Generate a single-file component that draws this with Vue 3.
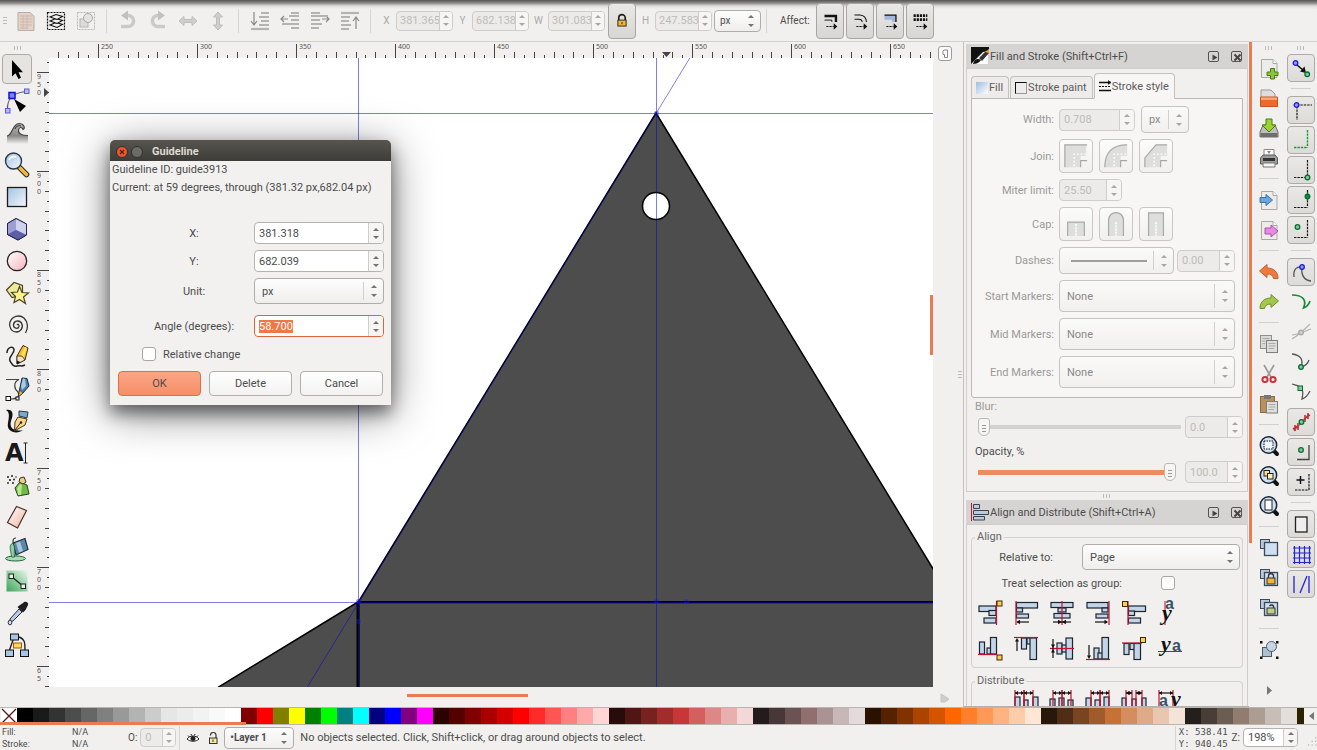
<script setup>
import { onMounted, ref } from 'vue'

const angle = ref(null)
onMounted(() => {
  angle.value.focus()
  angle.value.select()
})

/* ---------- icon drawing helpers, all on a 24 x 24 grid ---------- */
const bar = (x, y, w, h) => `<rect x="${x}" y="${y}" width="${w}" height="${h}" fill="#c3d5e8" stroke="#1c2430" stroke-width="1.2"/>`
const gold = (x, y) => `<rect x="${x}" y="${y}" width="5" height="5" fill="#fc5" stroke="#3a2a00"/>`
const red = d => `<path d="${d}" stroke="#c8102e" stroke-width="1.2" fill="none"/>`
const ink = (d, w = 1.3, c = '#111') => `<path d="${d}" stroke="${c}" stroke-width="${w}" fill="none"/>`
const solid = (d, c = '#111') => `<path d="${d}" fill="${c}"/>`
const dash = (d, c = '#111', w = 1.2) => `<path d="${d}" stroke="${c}" stroke-width="${w}" stroke-dasharray="2.4 1" fill="none"/>`
const dot = (x, y, f = '#7fc99a', s = '#0a6b30') => `<circle cx="${x}" cy="${y}" r="2.3" fill="${f}" stroke="${s}" stroke-width="1.3"/>`
const blueDot = (x, y) => dot(x, y, '#8f95f5', '#1a1ad8')
const sheet = `<path d="M4.500 3.500H16L20 7.500V21.500H4.500Z" fill="#ececea" stroke="#a9a9a6"/><path d="M16 3.500V7.500H20" fill="#fff" stroke="#a9a9a6"/>`
const lens = inner => `<path d="M17 17L20 20" stroke="#111" stroke-width="4" stroke-linecap="round"/><circle cx="11.500" cy="11" r="8.200" fill="#cfe0f3" stroke="#1d2734" stroke-width="1.500"/>${inner}`
const stack = inner => `<rect x="3.500" y="3.500" width="9" height="9" fill="#b7c9da" stroke="#3c4a58"/><rect x="7.500" y="6.500" width="13" height="13" fill="#cddff0" stroke="#3c4a58" stroke-width="1.300"/>${inner}`

const tools = [
  { name: 'Select', art: '<path d="M7 3V19.500L10.500 16.300L13.500 22L16 20.700L13.500 15.200H18Z" fill="#000"/>' },
  { name: 'Edit nodes', art: ink('M2.500 21C2 12 5 4 21 2.500', 1.2, '#555') + '<rect x="4" y="3.500" width="6" height="6" fill="#7d86f0" stroke="#1010c8" stroke-width="1.500"/><rect x="19.500" y="0" width="4.500" height="4.500" fill="#b3b8f7" stroke="#5a5ae0"/><rect x="0.500" y="19.500" width="4.500" height="4.500" fill="#b3b8f7" stroke="#5a5ae0"/><path d="M9 10L21 17L15 23Z" fill="#000"/>' },
  { name: 'Tweak', art: '<path d="M2 15C7 14 7 3 14 2.500C19 2.500 20 7 18 8.500C17 6 14 6 13.500 9C13 13 17 14.500 23 14.500V23H2Z" fill="url(#gray)"/>' + ink('M2 15C8 14 7 3 14 2.500C19 2.500 20.500 7 18 8.500C17 5.500 14 6 13.500 9C13 13 17 14.500 23 14.500M10 8C11 5 14 4 16 5', 1.2, '#444') },
  { name: 'Zoom', art: '<path d="M14 14L21.500 21.500" stroke="#222" stroke-width="5.500" stroke-linecap="round"/><path d="M15 15L21.500 21.500" stroke="#f5b93a" stroke-width="3.600" stroke-linecap="round"/><circle cx="8.500" cy="8" r="8" fill="url(#sky)" stroke="#26384a" stroke-width="1.400"/><path d="M4 7C5 4 8 3 11 4" stroke="#fff" stroke-width="1.500" fill="none"/>' },
  { name: 'Rectangle', art: '<rect x="2.500" y="2.500" width="19" height="19" fill="url(#sky)" stroke="#1b1b1b" stroke-width="1.300"/>' },
  { name: '3D box', art: '<path d="M11 1.500L21.500 7V18L13 23L2.500 17.500V6.500Z" fill="#8c8ec8" stroke="#23234a"/><path d="M11 1.500L21.500 7V18L11 13Z" fill="#cfd1ee"/><path d="M2.500 6.500L11 1.500V13L2.500 17.500Z" fill="#9c9ed4"/><path d="M2.500 17.500L11 13L21.500 18L13 23Z" fill="#5d5fa6"/><path d="M11 1.500L21.500 7V18L13 23L2.500 17.500V6.500Z" fill="none" stroke="#23234a"/>' },
  { name: 'Ellipse', art: '<circle cx="12" cy="12" r="9.700" fill="url(#rose)" stroke="#222" stroke-width="1.300"/>' },
  { name: 'Star', art: '<path d="M1.500 9L9 1.500L17.500 4.500V14L7 16.500Z" fill="#efe9a0" stroke="#4a4620" stroke-width="1.200"/><path d="M14.500 5.500L17 11.500L23.500 12L18.500 16L20.500 22.500L14.500 18.500L9 21.500L10.500 15.500L6.500 11.500L12.500 11Z" fill="#fbf38e" stroke="#4a4620" stroke-width="1.200"/>' },
  { name: 'Spiral', art: ink('M12 12C12.500 10.500 14.500 11.500 14 13.500C13 16.500 8.500 15.500 8.500 12C8.500 8 14 6.500 16.500 10C19 14.500 15.500 19 11.500 19C6 19 3.500 13 5 9C7 3.500 14 1 19 5C23 9 23.500 15 20.500 20', 1.3, '#333') },
  { name: 'Pencil', art: '<path d="M2 8C2 2 9 0 9 5C9 9 3 12 5 16C7 19 8 22 12 21C16 20 16 22 20 20" stroke="#222" stroke-width="1.500" fill="none"/><path d="M12 11L18 0.500L23 3L20 15L12 19Z" fill="#ffb92c" stroke="#3a2a10"/><path d="M15 12L20 2L22 3L18 14Z" fill="#ffe45c"/><path d="M12 11L12 19L20 15L17 11Z" fill="#f7e2c0" stroke="#3a2a10" stroke-width=".8"/><path d="M12 15.500V19L15.500 17.200Z" fill="#111"/>' },
  { name: 'Bezier', art: ink('M1 2.500H14C8 5 9 12 13 15C15 19 13 22 5 22', 1.2, '#444') + '<rect x="1" y="19.500" width="4.500" height="4" fill="#fff" stroke="#111"/><path d="M17 1L22 1.500L24 9L18 16L13.500 19.500L14.500 13Z" fill="#4e7da8" stroke="#1c2c3c"/><path d="M18 1.500L20 2L21 9L17 13L16 9Z" fill="#a8cbe8"/><path d="M14.500 13L18 16L13.500 19.500Z" fill="#f3bf3a" stroke="#333" stroke-width=".7"/><rect x="11" y="20" width="3" height="3" fill="#fff" stroke="#111"/>' },
  { name: 'Calligraphy', art: '<path d="M1 1C8 0 9 5 6 12C4 19 9 23 18 21C12 26 1 23 3 14C4 8 5 3 1 1Z" fill="#111"/><path d="M14 2L23 3L22 9L14 7Z" fill="#7fa9cc" stroke="#263849"/><path d="M13 8L22 10L20 16L9.500 22L10 13Z" fill="#f8d888" stroke="#4b3514"/><path d="M10 21L15.500 14" stroke="#222"/><circle cx="16" cy="13.500" r="1.200" fill="#222"/>' },
  { name: 'Text', text: true },
  { name: 'Spray', art: '<path d="M10 15L15 9L22 12L24 21L13 23Z" fill="#74b849" stroke="#23451a"/><path d="M12 15L15 11L17 12L16 22L13 22Z" fill="#b9e78d"/><path d="M14 9L15 5L19 4L21 9L18 11Z" fill="#e8cf8a" stroke="#3d3520"/><g fill="#222"><circle cx="3" cy="4" r="1"/><circle cx="7" cy="3" r="1"/><circle cx="5" cy="7" r="1.100"/><circle cx="9" cy="6.500" r="1"/><circle cx="3" cy="10" r=".9"/><circle cx="8" cy="10" r="1"/><circle cx="11" cy="4" r=".8"/></g>' },
  { name: 'Eraser', art: '<path d="M11.500 1.500L21.500 5.500L12.500 23L2.500 17.500Z" fill="url(#peach)" stroke="#4a3028" stroke-width="1.200"/>' },
  { name: 'Paint bucket', art: '<ellipse cx="10.500" cy="21.500" rx="10" ry="2.500" fill="#a8dcb4" stroke="#23603a"/><path d="M8 6L20 1.500L23 12.500L11 18Z" fill="#5d87a8" stroke="#1e3040" stroke-width="1.200"/><path d="M11 6L15 4.500L18 14L14 15.500Z" fill="#a6c8e0"/><path d="M8 6C3 8 6 13 6.500 20H9.500C9 15 10 11 9 9Z" fill="#8fcfa0" stroke="#23603a" stroke-width=".8"/>' + ink('M9 7C7 4 8 1 11 1', 1.2, '#333') },
  { name: 'Gradient', art: '<rect x="1.500" y="1.500" width="21" height="21" fill="url(#leaf)"/>' + ink('M7 8L18 17', 1.3, '#222') + '<rect x="4" y="5" width="4.500" height="4.500" fill="#dff3e3" stroke="#222"/><rect x="16" y="15" width="4.500" height="4.500" fill="#dff3e3" stroke="#222"/>' },
  { name: 'Dropper', art: '<path d="M5 18L14 8L17 11L8 20L5 21Z" fill="#b9cbe0" stroke="#27303c"/><path d="M12.500 6L18 11.500L20.500 9L23 4C24 1 20 -0.500 18 2L15 4Z" fill="#1d1d22"/><ellipse cx="5" cy="21.500" rx="1.800" ry="2.400" fill="#cfe0f3" stroke="#27303c"/>' },
  { name: 'Connector', art: ink('M8 7L4.500 17M14 4C20 6 20 10 20 17', 1.4, '#222') + '<rect x="5.500" y="1" width="8" height="6" fill="#a9c6e6" stroke="#111"/><rect x="8.500" y="10" width="8" height="5" fill="#ffd65c" stroke="#a05a00"/><rect x="0.500" y="17" width="8" height="6.500" fill="#a9c6e6" stroke="#111"/><rect x="15.500" y="17" width="8" height="6.500" fill="#a9c6e6" stroke="#111"/>' }
]

const g = '#b4b3b1'
const editButtons = [
  [
    { name: 'Select all', art: '<path d="M4 3.500H16L20 7V21.500H4Z" fill="#e4d2c6" stroke="#b5b0ab"/><path d="M6 7H18M6 10H18M6 13H18M6 16H18M6 19H14M9 6V20M13 6V20" stroke="#cbb8ac" fill="none"/>' },
    { name: 'Select all in all layers', art: '<rect x="3.500" y="3.500" width="17" height="17" fill="none" stroke="#111" stroke-width="1.200" stroke-dasharray="2 1"/><path d="M6 16L12 13.500L18.500 15.500L13 18.500Z" fill="#f2f2f2" stroke="#111" stroke-width="1.100"/><path d="M6 12L12 9.500L18.500 11.500L13 14.500Z" fill="#f2f2f2" stroke="#111" stroke-width="1.100"/><path d="M6 8L12 5.500L18.500 7.500L13 10.500Z" fill="#f2f2f2" stroke="#111" stroke-width="1.100"/>' },
    { name: 'Deselect', art: '<rect x="3.500" y="3.500" width="17" height="17" fill="none" stroke="#b8b7b5" stroke-dasharray="2 1"/><rect x="6" y="10" width="8" height="8" fill="#dcdbd9" stroke="#b5b5b5"/><circle cx="14" cy="9" r="4.500" fill="#e4e3e1" stroke="#aaa"/>' }
  ],
  [
    { name: 'Rotate left', art: '<path d="M10 6.500H12A5.300 5.300 0 0 1 12 17.500H5" fill="none" stroke="#cbcac8" stroke-width="3.600"/><path d="M12 1.500V11.500L5 6.500Z" fill="#c2c1bf"/>' },
    { name: 'Rotate right', art: '<path d="M14 6.500H12A5.300 5.300 0 0 0 12 17.500H19" fill="none" stroke="#cbcac8" stroke-width="3.600"/><path d="M12 1.500V11.500L19 6.500Z" fill="#c2c1bf"/>' },
    { name: 'Flip horizontal', art: '<path d="M3 12L8 7.500V10.500H16V7.500L21 12L16 16.500V13.500H8V16.500Z" fill="#cfcecc" stroke="#bdbcba"/>' },
    { name: 'Flip vertical', art: '<path d="M12 3L7.500 8H10.500V16H7.500L12 21L16.500 16H13.500V8H16.500Z" fill="#cfcecc" stroke="#bdbcba"/>' }
  ],
  [
    { name: 'Lower to bottom', art: ink('M3 20H21', 2.2, g) + ink('M6 3V15M3 12L6 16L9 12', 1.2, '#8b8a88') + ink('M13 4H21M11 8H21M13 12H21M11 16H21', 1.8, g) },
    { name: 'Lower', art: ink('M3 10H10M6 7L3 10L6 13', 1.2, '#8b8a88') + ink('M13 4H21M11 7H21M13 11H21M4 15H21M13 19H21', 1.8, g) },
    { name: 'Raise', art: ink('M14 10H21M18 7L21 10L18 13', 1.2, '#8b8a88') + ink('M3 4H12M3 7H20M3 11H12M3 15H14M3 19H11', 1.8, g) },
    { name: 'Raise to top', art: ink('M3 4H21', 2.2, g) + ink('M18 20V8M15 12L18 8L21 12', 1.2, '#8b8a88') + ink('M3 8H12M3 12H11M3 16H13M3 20H11', 1.8, g) }
  ]
]

const arrow = dash('M8 18H16', '#111', 1.3) + solid('M16 14.500L20 18L16 21.500Z')
const affects = [
  { name: 'Scale stroke width', art: ink('M6 6.500H18.500V13', 2.6) + ink('M6 11H14V13', 1) + arrow },
  { name: 'Scale rounded corners', art: ink('M6 5.500H12Q18.500 6 19 13M6 10H11Q14 10 14.500 13', 1.1) + arrow },
  { name: 'Move gradients', art: '<path d="M6 5.500H18.500V13H14V10.500H6Z" fill="#a3b6de"/>' + ink('M6 5.500H18.500V13', 1.4) + arrow },
  { name: 'Move patterns', art: dash('M5 6H20', '#111', 3) + dash('M5 10.500H20', '#111', 3) + arrow }
]

const transforms = [
  { label: 'X', value: '381.365' },
  { label: 'Y', value: '682.138' },
  { label: 'W', value: '301.083' }
]

const commands = [
  { name: 'New', art: sheet + '<path d="M13.500 12.500H17.500V16H21V19.500H17.500V23H13.500V19.500H10V16H13.500Z" fill="#8cc63f" stroke="#4c7a12"/>' },
  { name: 'Open', art: '<path d="M4 4H14L18 8V18H4Z" fill="#ddd" stroke="#999"/><path d="M3.500 11H20.500V20.500H3.500Z" fill="#ee6a2c" stroke="#c4551f"/><path d="M4 11.500H20V14H4Z" fill="#ffa673"/>' },
  { name: 'Save', art: '<path d="M6 9H18L21 16V21H3V16Z" fill="#bdbdbb" stroke="#6d6d6b"/><path d="M3.500 17H20.500V21H3.500Z" fill="#6e6e6c"/><path d="M9 3H15V9H19L12 16L5 9H9Z" fill="#9bd332" stroke="#4c7a12"/>' },
  { name: 'Print', art: '<path d="M7 3.500H17V11H7Z" fill="#fff" stroke="#888"/><path d="M10 5L12 8L14 5" fill="#888"/><path d="M3.500 12L6 9H18L20.500 12V18H3.500Z" fill="#9d9d9b" stroke="#5a5a58"/><path d="M6 12H18V15H6Z" fill="#333"/><path d="M6 17H18V21H6Z" fill="#f5f5f3" stroke="#777"/>' },
  null,
  { name: 'Import', art: sheet + '<path d="M3 9.500H9V6.500L15.500 12L9 17.500V14.500H3Z" fill="#6aa5dd" stroke="#3d73a6"/>' },
  { name: 'Export', art: sheet + '<path d="M8 10H14V7L21 13L14 19V16H8Z" fill="#e78be0" stroke="#b050aa"/>' },
  null,
  { name: 'Undo', art: '<path d="M2.500 11L10 4.500V8C17 8 21 12 21 18.500H16.500C16 15.500 14 14 10 14V17.500Z" fill="#ef7a3e" stroke="#c4602c"/>' },
  { name: 'Redo', art: '<path d="M21.500 11L14 4.500V8C7 8 3 12 3 18.500H7.500C8 15.500 10 14 14 14V17.500Z" fill="#a2c74b" stroke="#6f9228"/>' },
  null,
  { name: 'Copy', art: '<rect x="3.500" y="3.500" width="11" height="13" fill="#d9d9d6" stroke="#8e8e8b"/><rect x="9.500" y="8.500" width="11" height="12" fill="#dededb" stroke="#7e7e7b"/>' + ink('M11.500 11.500H18.500M11.500 14H18.500M11.500 16.500H17M5.500 6.500H12.500M5.500 9H8M5.500 11.500H8', 1, '#aaa') },
  { name: 'Cut', art: '<path d="M7 3L14 15M17 3L10 15" stroke="#9b9b99" stroke-width="1.700"/><circle cx="8" cy="17.500" r="2.600" fill="none" stroke="#c8343c" stroke-width="2"/><circle cx="16" cy="17.500" r="2.600" fill="none" stroke="#c8343c" stroke-width="2"/>' },
  { name: 'Paste', art: '<rect x="3.500" y="4.500" width="14" height="16" fill="#b9915f" stroke="#8d6b40"/><path d="M7 3H14V7H7Z" fill="#777"/><rect x="9.500" y="9.500" width="11" height="11.500" fill="#dededb" stroke="#7e7e7b"/>' + ink('M11.500 12.500H18.500M11.500 15H18.500M11.500 17.500H17', 1, '#aaa') },
  null,
  { name: 'Zoom selection', art: lens('<rect x="7" y="7" width="9" height="8" fill="#eef5fc" stroke="#111" stroke-dasharray="1.500 1"/>') },
  { name: 'Zoom drawing', art: lens('<rect x="7" y="6.500" width="5.500" height="5.500" fill="#ffe08a" stroke="#222"/><rect x="10.500" y="9.500" width="5.500" height="5.500" fill="#fff0b0" stroke="#222"/>') },
  { name: 'Zoom page', art: lens('<rect x="8" y="6" width="7" height="10" fill="#fff" stroke="#222"/>') },
  null,
  { name: 'Duplicate', art: stack('') },
  { name: 'Clone', art: stack('<rect x="10" y="12" width="8" height="6" fill="#f2b632" stroke="#333"/><path d="M11.500 12V10A2.500 2.500 0 0 1 16.500 10V12" fill="none" stroke="#333" stroke-width="1.300"/>') },
  { name: 'Unlink clone', art: stack('<rect x="10" y="12" width="8" height="6" fill="#bcd08a" stroke="#333"/><path d="M12.500 10A2.500 2.500 0 0 1 16.500 10V12" fill="none" stroke="#333" stroke-width="1.300"/>') },
  null,
  { name: 'Group', art: '<rect x="5.500" y="9.500" width="9" height="9" fill="#aebfcf" stroke="#4d5b68"/><circle cx="14.500" cy="8.500" r="5" fill="#c5d6e6" stroke="#4d5b68"/>' + solid('M3 3H5.500V5.500H3ZM19 3H21.500V5.500H19ZM3 18.500H5.500V21H3ZM19 18.500H21.500V21H19Z') }
]

const corner = 'M18.500 2V19.500M5 19.500H18.500'
const snaps = [
  { name: 'Enable snapping', on: true, art: ink('M8 9L14 14', 1.6) + solid('M17 17L15.500 10.500L11 15.500Z') + blueDot(6.5, 7) + dot(18.2, 18.3) },
  null,
  { name: 'Snap bounding boxes', on: true, art: dash('M8 8V22M8 7H23') + blueDot(7.5, 7) },
  { name: 'Snap to edges', on: true, art: dash(corner, '#12a02c', 1.4) },
  { name: 'Snap to corners', on: true, art: dash(corner) + dot(18.5, 19.5) },
  { name: 'Snap edge midpoints', on: true, art: dash(corner) + ink('M18.500 4V13', 1.2, '#0a6b30') + dot(18.5, 8.5, '#0f8a3f') },
  { name: 'Snap box centers', on: true, art: dash(corner) + dot(8.5, 9) },
  null,
  { name: 'Snap nodes', on: true, art: ink('M5 17C4 9 8 6 13 7C12 15 15 20 22 21', 1.3, '#555') + blueDot(13, 7) },
  { name: 'Snap to paths', art: ink('M3 5C14 5 18 10 14.500 18C18 17 20 14 21 11', 1.7, '#178a36') },
  { name: 'Snap intersections', art: ink('M3 19C10 15 16 9 21 4M3 15C10 14 16 11 22 9', 1.2, '#b5b4b2') + dot(12, 12.5, '#ccc', '#aaa') },
  { name: 'Snap cusp nodes', art: ink('M3 4C11 5 15 9 12 17C17 16 19 13 20 10', 1.3, '#555') + dot(12, 17) },
  { name: 'Snap smooth nodes', art: ink('M3 4C10 6 16 6 13 19C17 18 19 15 21 11', 1.3, '#555') + '<rect x="9" y="6" width="4.500" height="4.500" fill="#7fc99a" stroke="#0a6b30"/>' },
  { name: 'Snap line midpoints', on: true, art: ink('M5 21L20 4', 1.2, '#888') + ink('M6 15V21M9 13V20M16 5V12M19 3V9M4 19L9 16M15 9L21 5', 1.5, '#c8242c') + dot(12.5, 12) },
  { name: 'Snap object centers', on: true, art: ink('M20 5V19.500H8', 1.3, '#444') + dot(12, 10) },
  { name: 'Snap rotation centers', on: true, art: dash('M20 4V20M6 20H20') + ink('M11.500 6V14M7.500 10H15.500', 1.5) },
  null,
  { name: 'Snap page border', on: true, art: '<rect x="6.500" y="5" width="11.500" height="15" fill="#eee" stroke="#222" stroke-width="1.300"/>' },
  { name: 'Snap grids', on: true, art: ink('M5.500 4V22M10.500 4V22M15.500 4V22M20.500 4V22M4 6H22M4 11H22M4 16H22M4 20.500H22', 1.2, '#2323d8') },
  { name: 'Snap guides', on: true, art: ink('M5 4V21M11 21L18 4M20 4V21', 1.3, '#2323d8') }
]

const aligns = [
  { name: 'Align right edges to left of anchor', art: bar(1, 5, 17, 5.5) + bar(11, 9.500, 7, 5) + bar(6, 17, 12, 5) + red('M18.500 0V24') + gold(19, 0) },
  { name: 'Align left edges', art: bar(2.5, 1.5, 21, 5.500) + bar(2.5, 7, 6, 4) + bar(2.5, 13, 12, 4) + red('M2 0V24') + ink('M3 21H15', 1.2) + solid('M2.500 21L6 18.800V23.200Z') },
  { name: 'Center on vertical axis', art: bar(1, 1.5, 22, 5) + bar(8, 7, 8, 4) + bar(4, 12.500, 16, 4.500) + red('M12 0V24') + ink('M3 21H21', 1.2) + solid('M12 21L8 18.800V23.200ZM12 21L16 18.800V23.200Z') },
  { name: 'Align right edges', art: bar(1, 1.5, 21, 5.500) + bar(16, 7, 6, 4) + bar(10, 13, 12, 4) + red('M23 0V24') + ink('M9 21H21', 1.2) + solid('M22 21L18.500 18.800V23.200Z') },
  { name: 'Align left edges to right of anchor', art: bar(6.500, 5, 17, 5.5) + bar(6.500, 10, 6, 4.500) + bar(6.500, 17, 12, 5) + red('M6 0V24') + gold(0.5, 0.5) },
  { name: 'Align baseline anchors horizontally', glyph: 'v' },
  { name: 'Align bottom edges to top of anchor', art: bar(1.5, 5, 5, 12) + bar(9, 11, 6, 6) + bar(12.500, 0.500, 6, 16.500) + red('M0 17.500H19') + gold(19, 18) },
  { name: 'Align top edges', art: bar(7.500, 1, 5, 11) + bar(13, 1, 4, 6) + bar(16, 1, 6.500, 21.500) + red('M0 0.500H24') + ink('M3 3V14', 1.2) + solid('M3 1L5 4.500H1Z') },
  { name: 'Center on horizontal axis', art: bar(7, 6, 5, 11) + bar(12, 8, 5, 7) + bar(16, 1, 6.500, 21) + red('M0 11.500H24') + ink('M3 2V21', 1.2) + solid('M3 11L1 7.500H5ZM3 12L1 15.500H5Z') },
  { name: 'Align bottom edges', art: bar(8, 11, 5, 11) + bar(12, 16, 5, 6) + bar(16, 0.5, 6.500, 21.500) + red('M0 22.500H24') + ink('M3 8V19', 1.2) + solid('M3 22L1 18.500H5Z') },
  { name: 'Align top edges to bottom of anchor', art: bar(2, 6.500, 5, 11) + bar(8, 6.500, 5, 6) + bar(12, 6.500, 6.500, 16) + red('M0 6H20') + gold(18.5, 0.5) },
  { name: 'Align baseline anchors vertically', glyph: 'h' }
]

const arrowsAt = (a, c) => red(`M${a} 0V24M${c} 0V24`) + ink(`M${a} 3H${c}`, 1.2) + solid(`M${a} 3L${a + 3} 1V5ZM${c} 3L${c - 3} 1V5Z`)
const distributes = [
  { name: 'Distribute left edges', art: bar(1, 7, 5, 14) + bar(10, 10, 4, 12) + bar(19, 7, 5, 14) + arrowsAt(1, 10) + arrowsAt(10, 19) },
  { name: 'Distribute centers', art: bar(0, 9, 5, 14) + bar(9, 8, 5, 12) + bar(18, 10, 5, 14) + arrowsAt(3, 12) + arrowsAt(12, 21) },
  { name: 'Distribute right edges', art: bar(0, 8, 5, 14) + bar(9, 10, 5, 12) + bar(18, 7, 5, 14) + arrowsAt(5, 14) + arrowsAt(14, 23) },
  { name: 'Distribute gaps', art: bar(0, 8, 4, 14) + bar(10, 9, 4, 12) + bar(20, 8, 4, 14) + arrowsAt(4, 10) + arrowsAt(14, 20) },
  { name: 'Distribute baselines', art: arrowsAt(1, 15), letters: true }
]

const joins = [
  { name: 'Miter join', art: '<path d="M2 2H25V14H19V26H2Z" fill="#dededd"/>' + ink('M2 26V2H26', 1.3, '#a9a9a9') },
  { name: 'Round join', art: '<path d="M2 26C2 10 10 2 26 2V14H19V26Z" fill="#dededd"/>' + ink('M2 26C2 10 10 2 26 2', 1.3, '#a9a9a9') },
  { name: 'Bevel join', art: '<path d="M2 16L14 2H26V14H19V26H2Z" fill="#dededd"/>' + ink('M2 26V16L14 2H26', 1.3, '#a9a9a9') }
].map(j => ({ ...j, art: j.art + ink('M12 25V12H25', 1.5, '#fff').replace('fill="none"', 'fill="none" stroke-dasharray="2 2"') + ink('M19 26V19H26', 1.2, '#a9a9a9') }))

const caps = [
  { name: 'Butt cap', art: '<path d="M5 27V12H23V27" fill="#dededd" stroke="#a9a9a9" stroke-width="1.300"/>' + dash('M14 14V27', '#fff', 1.6) },
  { name: 'Round cap', art: '<path d="M6 27V10C6 -1 22 -1 22 10V27" fill="#dededd" stroke="#a9a9a9" stroke-width="1.300"/>' + dash('M14 12V27', '#fff', 1.6) },
  { name: 'Square cap', art: '<path d="M6 27V2H22V27" fill="#dededd" stroke="#a9a9a9" stroke-width="1.300"/>' + dash('M14 12V27', '#fff', 1.6) }
]

const markers = ['Start Markers:', 'Mid Markers:', 'End Markers:']

const palette = (
  '000000 1a1a1a 333333 4d4d4d 666666 808080 999999 b3b3b3 cccccc e6e6e6 ececec f2f2f2 f9f9f9 ffffff ' +
  '800000 ff0000 808000 ffff00 008000 00ff00 008080 00ffff 000080 0000ff 800080 ff00ff ' +
  '2b0000 550000 800000 aa0000 d40000 ff0000 ff2a2a ff5555 ff8080 ffaaaa ffd5d5 ' +
  '280b0b 501616 782121 a02c2c c83737 d35f5f de8787 e9afaf f4d7d7 ' +
  '241c1c 483737 6c5353 916f6f ac9393 c8b7b7 e3dbdb ' +
  '2b1100 552200 803300 aa4400 d45500 ff6600 ff7f2a ff9955 ffb380 ffccaa ffe6d5 ' +
  '28170b 502d16 784421 a05a2c c87137 d38d5f deaa87 e9c6af f4e3d7 ' +
  '241f1c 483e37 6c5d53 917c6f ac9d93 c8beb7 e3dedb 2b2200 554400 806600 aa8800 d4aa00 ffcc00'
).split(' ').map(c => '#' + c)

/* ---------- rulers: a labelled mark every 99 px, ten divisions each ---------- */
const step = 99.04
const rulerWidth = window.innerWidth - 433
const rulerHeight = window.innerHeight - 121
const tickLength = i => (i % 10 === 0 ? 14 : i % 2 === 0 ? 6 : 3)
const series = (start, length, inset) => {
  const ticks = []
  for (let i = -4; start + (i * step) / 10 < length; i++) {
    ticks.push({ at: Math.round(start + (i * step) / 10) + 0.5, len: tickLength((i + 10) % 10) })
  }
  const marks = []
  for (let k = 0; start + k * step < length - inset; k++) marks.push(Math.round(start + k * step))
  return { ticks, marks }
}
const h = series(49, rulerWidth, 16)
const v = series(14, rulerHeight, 8)
const hLabels = h.marks.map((at, k) => ({ at: at + 3, text: 250 + k * 50 }))
const vLabels = v.marks.map((at, k) => ({ at, digits: String(950 - k * 50).split('').filter((_, i) => at + 6 + i * 8 < rulerHeight - 1) }))
</script>

<template>
  <div class="app">
    <svg class="defs" aria-hidden="true">
      <linearGradient id="sky" x1="0" y1="0" x2="1" y2="1"><stop offset="0" stop-color="#a3c2e2" /><stop offset="1" stop-color="#f4f8fc" /></linearGradient>
      <linearGradient id="rose" x1="0" y1="0" x2="1" y2="1"><stop offset="0" stop-color="#fff" /><stop offset="1" stop-color="#f7b3b9" /></linearGradient>
      <linearGradient id="peach" x1="0" y1="0" x2="1" y2="1"><stop offset="0" stop-color="#fff" /><stop offset="1" stop-color="#efb49f" /></linearGradient>
      <linearGradient id="leaf" x1="1" y1="0" x2="0" y2="1"><stop offset="0" stop-color="#e6f6ea" /><stop offset="1" stop-color="#3fa659" /></linearGradient>
      <linearGradient id="gray" x1="0" y1="0" x2="0" y2="1"><stop offset="0" stop-color="#bbb" /><stop offset=".6" stop-color="#888" /><stop offset="1" stop-color="#f1f0ee" /></linearGradient>
    </svg>

    <header class="toolbar">
      <span class="grip"></span>
      <template v-for="(group, gi) in editButtons" :key="gi">
        <div class="group">
          <button v-for="b in group" :key="b.name" class="flat" :aria-label="b.name"><svg viewBox="0 0 24 24" v-html="b.art"></svg></button>
        </div>
        <span class="vsep"></span>
      </template>
      <label v-for="t in transforms" :key="t.label" class="measure">
        <span>{{ t.label }}</span>
        <span class="spin off"><input :value="t.value" disabled /><i class="steps"></i></span>
      </label>
      <button class="tall" aria-label="Lock ratio">
        <svg viewBox="0 0 24 24"><path d="M8.500 11V8.500a3.500 3.500 0 0 1 7 0V11" fill="none" stroke="#222" stroke-width="1.800" /><rect x="7.500" y="11" width="9" height="6.500" fill="#f2b632" stroke="#222" /><path d="M12 13v2.500" stroke="#222" /></svg>
      </button>
      <label class="measure last">
        <span>H</span>
        <span class="spin off"><input value="247.583" disabled /><i class="steps"></i></span>
      </label>
      <span class="combo unit-top"><select aria-label="Unit"><option>px</option></select><i class="steps"></i></span>
      <span class="vsep"></span>
      <span class="affect">Affect:</span>
      <div class="affects">
        <button v-for="a in affects" :key="a.name" class="tall" :aria-label="a.name"><svg viewBox="0 0 24 24" v-html="a.art"></svg></button>
      </div>
    </header>

    <main class="work">
      <nav class="toolbox" aria-label="Tools">
        <span class="grip flatgrip"></span>
        <button v-for="(t, i) in tools" :key="t.name" class="tool" :class="{ on: i === 0 }" :aria-label="t.name">
          <svg v-if="t.text" viewBox="0 0 24 24"><text x="0" y="20" class="tool-letter">A</text><path d="M20.500 2V22M18.500 2H22.500M18.500 22H22.500" stroke="#222" /></svg>
          <svg v-else viewBox="0 0 24 24" v-html="t.art"></svg>
        </button>
      </nav>

      <section class="editor">
        <svg class="hruler">
          <path v-for="t in h.ticks" :key="t.at" :d="`M${t.at} 16V${16 - t.len}`" stroke="#444" />
          <text v-for="l in hLabels" :key="l.text" :x="l.at" y="7">{{ l.text }}</text>
          <path d="M613 10H622L617.500 15Z" fill="#444" />
        </svg>
        <svg class="vruler">
          <path v-for="t in v.ticks" :key="t.at" :d="`M12 ${t.at}H${12 - (t.len === 14 ? 12 : t.len === 6 ? 4 : 2)}`" stroke="#444" />
          <template v-for="l in vLabels" :key="l.at">
            <text v-for="(d, i) in l.digits" :key="i" x="0" :y="l.at + 7 + i * 8">{{ d }}</text>
          </template>
          <path d="M7 30L12 34.500L7 39Z" fill="#444" />
        </svg>
        <svg class="canvas">
          <g stroke="#000" stroke-width="1.500" fill="#4d4d4d">
            <path d="M309 544L150 641H309Z" />
            <path d="M607 55L309 544.500H904.500Z" />
            <path d="M309.500 544.500H1800V1200H309.500Z" />
          </g>
          <path d="M309 545V1200" stroke="#000" stroke-width="3" />
          <path d="M309 544H2000" stroke="#000" stroke-width="2" />
          <circle cx="607" cy="148" r="13.500" fill="#fff" stroke="#000" stroke-width="1.500" />
          <g class="guides">
            <path d="M309.500 0V2000M607.500 0V2000M0 55.500H2600M0 544.500H2600M642 -2L-200 1383" />
          </g>
          <g class="nodes">
            <rect x="308" y="542" width="3" height="3" /><rect x="606" y="54" width="3" height="3" />
            <rect x="606" y="542" width="3" height="3" /><rect x="636" y="542" width="3" height="3" /><rect x="308" y="562" width="3" height="3" />
          </g>
        </svg>
        <div class="side">
          <button class="zoomfix" aria-label="Zoom when window is resized"><svg viewBox="0 0 12 13"><path d="M5 3H8.500V10.500H5.500V7.500H4V4Z" fill="#fff" stroke="#8b8987" /></svg></button>
          <svg class="cms" viewBox="0 0 12 12"><path d="M2 2L10 7L6 10H2Z" fill="#cfcecc" stroke="#c5c4c2" /></svg>
        </div>
        <span class="vthumb"></span>
        <span class="hthumb"></span>
        <span class="split-grip"></span>

        <div class="dialog" role="dialog" aria-label="Guideline">
          <div class="titlebar">
            <button class="wclose" aria-label="Close"><svg viewBox="0 0 10 10"><path d="M3 3L7 7M7 3L3 7" stroke="#5c1f0c" stroke-width="1.200" /></svg></button>
            <button class="wmax" aria-label="Maximize"></button>
            <b>Guideline</b>
          </div>
          <p>Guideline ID: guide3913</p>
          <p>Current: at 59 degrees, through (381.32 px,682.04 px)</p>
          <div class="form">
            <label for="gx">X:</label>
            <span class="spin"><input id="gx" value="381.318" /><i class="steps"></i></span>
            <label for="gy">Y:</label>
            <span class="spin"><input id="gy" value="682.039" /><i class="steps"></i></span>
            <label for="gu">Unit:</label>
            <span class="combo split"><select id="gu"><option>px</option></select><i class="steps"></i></span>
            <label for="ga">Angle (degrees):</label>
            <span class="spin focus"><input id="ga" ref="angle" value="58.700" /><i class="steps"></i></span>
          </div>
          <label class="relative"><input type="checkbox" />Relative change</label>
          <div class="actions">
            <button class="primary">OK</button>
            <button>Delete</button>
            <button>Cancel</button>
          </div>
        </div>
      </section>

      <aside class="dock">
        <div class="head">
          <svg viewBox="0 0 18 18"><path d="M1 1H17V17H1Z" fill="#fff" /><path d="M0 0H18V4L12 5L0 17Z" fill="#111" /><path d="M2 17C3 12 7 11 10 13C8 16 5 17 2 17Z" fill="#111" /><path d="M8 11L16 3L18 6L11 14Z" fill="#333" /><path d="M14 5L18 2V6Z" fill="#e9a52c" /></svg>
          <span>Fill and Stroke (Shift+Ctrl+F)</span>
          <button class="mini" aria-label="Iconify"><svg viewBox="0 0 11 11"><path d="M3.500 2.500L8.500 5.500L3.500 8.500Z" fill="#444" /></svg></button>
          <button class="mini" aria-label="Close"><svg viewBox="0 0 11 11"><path d="M2.500 2.500L8.500 8.500M8.500 2.500L2.500 8.500" stroke="#444" stroke-width="2" /></svg></button>
        </div>
        <div class="panel">
          <div class="tabs">
            <button><i class="ic-fill"></i>Fill</button>
            <button><i class="ic-paint"></i>Stroke paint</button>
            <button class="current"><svg viewBox="0 0 12 12"><path d="M0 2.500H12M0 10.500H12" stroke="#111" stroke-width="1.500" /><path d="M0 6.500H12" stroke="#111" stroke-dasharray="2 1" /><path d="M9 0L12 2.500L9 5" fill="#111" /></svg>Stroke style</button>
          </div>
          <div class="sheet">
            <label for="sw">Width:</label>
            <div class="fields">
              <span class="spin off wide"><input id="sw" value="0.708" disabled /><i class="steps"></i></span>
              <span class="combo split off unit"><select aria-label="Width unit" disabled><option>px</option></select><i class="steps"></i></span>
            </div>
            <span class="lab">Join:</span>
            <div class="fields toggles">
              <button v-for="j in joins" :key="j.name" disabled :aria-label="j.name"><svg viewBox="0 0 28 28" v-html="j.art"></svg></button>
            </div>
            <label for="ml">Miter limit:</label>
            <div class="fields"><span class="spin off miter"><input id="ml" value="25.50" disabled /><i class="steps"></i></span></div>
            <span class="lab">Cap:</span>
            <div class="fields toggles">
              <button v-for="c in caps" :key="c.name" disabled :aria-label="c.name"><svg viewBox="0 0 28 28" v-html="c.art"></svg></button>
            </div>
            <label for="ds">Dashes:</label>
            <div class="fields dashes">
              <span class="combo split off dash"><select id="ds" disabled><option></option></select><i class="line"></i><i class="steps"></i></span>
              <span class="spin off"><input aria-label="Dash offset" value="0.00" disabled /><i class="steps"></i></span>
            </div>
            <template v-for="(m, i) in markers" :key="m">
              <label :for="'mk' + i">{{ m }}</label>
              <div class="fields"><span class="combo split off marker"><select :id="'mk' + i" disabled><option>None</option></select><i class="steps"></i></span></div>
            </template>
          </div>
          <label class="slabel dim" for="blur">Blur:</label>
          <div class="slide">
            <input id="blur" type="range" value="0" disabled />
            <span class="spin off"><input aria-label="Blur value" value="0.0" disabled /><i class="steps"></i></span>
          </div>
          <label class="slabel" for="opacity">Opacity, %</label>
          <div class="slide">
            <input id="opacity" class="full" type="range" value="100" />
            <span class="spin off"><input aria-label="Opacity value" value="100.0" disabled /><i class="steps"></i></span>
          </div>
        </div>
        <span class="grip flatgrip mid"></span>
        <div class="head">
          <svg viewBox="0 0 18 18"><path d="M.5 0V18" stroke="#c8102e" /><path d="M2.500 1.500H8.500V5.500H2.500ZM2.500 7.500H17.500V11.500H2.500ZM2.500 13.500H13.500V17H2.500Z" fill="#b9cbdd" stroke="#3a4552" /></svg>
          <span>Align and Distribute (Shift+Ctrl+A)</span>
          <button class="mini" aria-label="Iconify"><svg viewBox="0 0 11 11"><path d="M3.500 2.500L8.500 5.500L3.500 8.500Z" fill="#444" /></svg></button>
          <button class="mini" aria-label="Close"><svg viewBox="0 0 11 11"><path d="M2.500 2.500L8.500 8.500M8.500 2.500L2.500 8.500" stroke="#444" stroke-width="2" /></svg></button>
        </div>
        <div class="panel grow">
          <fieldset>
            <legend>Align</legend>
            <div class="rel">
              <label for="rel">Relative to:</label>
              <span class="combo"><select id="rel"><option>Page</option></select><i class="steps"></i></span>
            </div>
            <label class="treat">Treat selection as group:<input type="checkbox" /></label>
            <div class="icons">
              <button v-for="a in aligns" :key="a.name" class="flat" :aria-label="a.name">
                <svg v-if="a.glyph === 'v'" viewBox="0 0 24 24"><path d="M7 0V24" stroke="#c8102e" /><text x="7" y="8" class="ga">a</text><text x="4" y="19" class="gy">y</text></svg>
                <svg v-else-if="a.glyph" viewBox="0 0 24 24"><path d="M0 14.500H24" stroke="#c8102e" /><text x="3" y="14" class="gy">y</text><text x="14" y="14" class="ga">a</text></svg>
                <svg v-else viewBox="0 0 24 24" v-html="a.art"></svg>
              </button>
            </div>
          </fieldset>
          <fieldset>
            <legend>Distribute</legend>
            <div class="icons shifted">
              <button v-for="d in distributes" :key="d.name" class="flat" :aria-label="d.name">
                <svg v-if="d.letters" viewBox="0 0 24 24"><g v-html="d.art"></g><text x="1" y="16" class="ga">a</text><text x="13" y="16" class="gy">y</text></svg>
                <svg v-else viewBox="0 0 24 24" v-html="d.art"></svg>
              </button>
            </div>
          </fieldset>
        </div>
      </aside>
      <span class="dock-scroll"></span>

      <nav class="column" aria-label="Commands">
        <span class="grip flatgrip"></span>
        <template v-for="(c, i) in commands" :key="i">
          <button v-if="c" :aria-label="c.name"><svg viewBox="0 0 24 24" v-html="c.art"></svg></button>
          <hr v-else />
        </template>
        <button class="more" aria-label="More"><svg viewBox="0 0 24 24"><path d="M10 8L15 12.500L10 17Z" fill="#777" /></svg></button>
      </nav>
      <nav class="column snapcol" aria-label="Snapping">
        <span class="grip flatgrip"></span>
        <template v-for="(s, i) in snaps" :key="i">
          <button v-if="s" :class="{ on: s.on }" :aria-label="s.name"><svg viewBox="0 0 24 24" v-html="s.art"></svg></button>
          <hr v-else />
        </template>
      </nav>
    </main>

    <div class="palette">
      <button class="none" aria-label="No color"><svg viewBox="0 0 16 16"><path d="M1 1L15 15M15 1L1 15" stroke="#5a1010" stroke-width="1.300" /></svg></button>
      <div class="swatches"><button v-for="(c, i) in palette" :key="i" :aria-label="c" :style="{ background: c }"></button></div>
      <button class="back" aria-label="Palette menu"><svg viewBox="0 0 8 10"><path d="M7 1V9L2 5Z" fill="#777" /></svg></button>
      <span class="pthumb"></span>
    </div>

    <footer class="status">
      <dl><dt>Fill:</dt><dd>N/A</dd><dt>Stroke:</dt><dd>N/A</dd></dl>
      <label class="opac">O:<span class="spin off"><input value="0" disabled /><i class="steps"></i></span></label>
      <span class="ssep"></span>
      <button class="small" aria-label="Toggle layer visibility"><svg viewBox="0 0 14 14"><path d="M1 8C4 4 10 4 13 8C10 11 4 11 1 8Z" fill="#fff" stroke="#222" /><circle cx="7" cy="7.500" r="2.500" fill="#222" /><path d="M2 4.500L3.500 6M5 3L5.500 4.500M9 3L8.500 4.500M12 4.500L10.500 6" stroke="#222" /></svg></button>
      <button class="small" aria-label="Toggle layer lock"><svg viewBox="0 0 14 14"><path d="M4.500 4.500A2.700 2.700 0 0 1 10 4V7" fill="none" stroke="#333" stroke-width="1.200" /><rect x="3.500" y="7" width="7.500" height="5.500" fill="#f6e9a8" stroke="#333" /><path d="M7 8.500V11" stroke="#333" /></svg></button>
      <span class="combo layer"><select aria-label="Layer"><option>•Layer 1</option></select><i class="steps"></i></span>
      <p>No objects selected. Click, Shift+click, or drag around objects to select.</p>
      <pre>X: 538.41
Y: 940.45</pre>
      <label class="zoomlab">Z:<span class="spin"><input value="198%" /><i class="steps"></i></span></label>
      <svg class="resize" viewBox="0 0 10 10"><path d="M9 1V2M9 4V5M9 7V8M6 4V5M6 7V8M3 7V8" stroke="#aaa" /></svg>
    </footer>
  </div>
</template>

<style>
body { margin: 0; background: #f1f0ee; }
</style>

<style scoped>
.app, .app button, .app input, .app select { font-family: Roboto, "Open Sans", sans-serif; font-size: 11px; color: #4c4c4c; }
.app { position: relative; height: 100vh; min-height: 400px; display: flex; flex-direction: column; overflow: hidden; background: #f1f0ee; box-sizing: border-box; }
.app *, .app *::before, .app *::after { box-sizing: border-box; }
.defs { position: absolute; width: 0; height: 0; }
button { padding: 0; margin: 0; border: 0; background: none; display: grid; place-items: center; flex: none; }
svg { display: block; overflow: visible; }
p, pre, dl, dd { margin: 0; }

/* spin boxes and drop-downs */
.spin { display: flex; height: 22px; border: 1px solid #b6b3af; border-radius: 4px; background: #fff; overflow: hidden; }
.app .spin input { flex: 1; width: 0; min-width: 0; border: 0; outline: 0; padding: 0 0 0 4px; background: transparent; }
.steps { width: 15px; flex: none; display: flex; flex-direction: column; align-items: center; justify-content: center; gap: 5px; pointer-events: none; }
.steps::before, .steps::after { content: ""; border: 3px solid transparent; border-top-width: 0; border-bottom: 3px solid #757370; }
.steps::after { border-bottom: 0; border-top: 3px solid #757370; }
.spin .steps { background: #f6f5f4; border-left: 1px solid #cfccc9; }
.combo { display: flex; position: relative; border: 1px solid #b0ada9; border-radius: 4px; background: linear-gradient(#fdfdfd, #efeeec); }
.combo select { flex: 1; min-width: 0; width: 0; appearance: none; border: 0; outline: 0; background: transparent; padding: 0 0 0 7px; opacity: 1; }
.combo .steps { width: 18px; gap: 6px; }
.split .steps { width: 20px; position: relative; border-left: 1px solid #d2d0cd; margin: 3px 0; }
.off { border-color: #cfcdca; background: #ecebe9; }
.app .off input { color: #bdbbb8; }
.off .steps::before { border-bottom-color: #a9a7a4; }
.off .steps::after { border-top-color: #a9a7a4; }
.combo.off { background: linear-gradient(#fafaf9, #f1f0ef); border-color: #c6c4c1; }
.app .combo.off select { color: #8b8987; }
.grip { width: 4px; height: 8px; margin: 0 12px 0 3px; background: repeating-linear-gradient(#bdbbb8 0 1px, transparent 1px 3px); flex: none; }
.flatgrip { width: 8px; height: 4px; margin: 3px auto 4px; background: repeating-linear-gradient(90deg, #bdbbb8 0 1px, transparent 1px 3px); }

/* top toolbar */
.toolbar { height: 42px; flex: none; display: flex; align-items: center; border-bottom: 1px solid #d2d0cd; background: linear-gradient(#565452, #8c8a88 3px, #dddcda 6px, #f1f0ee 9px); }
.group { display: flex; gap: 6px; margin-right: 8px; }
.group svg { width: 24px; height: 24px; }
.group .flat { width: 24px; height: 24px; }
.group:first-of-type { margin-left: -5px; }
.vsep { width: 1px; height: 24px; background: #d6d4d1; margin-right: 9px; flex: none; }
.measure { display: flex; align-items: center; gap: 3px; color: #aaa; font-size: 10px; margin-right: 3px; }
.measure > span:first-child { width: 13px; text-align: center; }
.measure .spin { width: 57px; height: 20px; }
.app .measure .spin input { font-size: 11px; padding-left: 3px; }
.measure .steps { width: 13px; }
.last { margin: 0 2px 0 3px; }
.tall { width: 28px; height: 36px; border: 1px solid #a9a6a2; border-radius: 4px; background: linear-gradient(#e9e8e6, #d8d6d3); }
.tall svg { width: 22px; height: 22px; }
.app .unit-top { width: 47px; height: 22px; }
.app .unit-top select { padding-left: 5px; font-size: 10px; }
.unit-top + .vsep { margin: 0 13px 0 5px; }
.affect { width: 36px; white-space: nowrap; font-size: 10px; }
.affects { display: flex; gap: 2px; }

/* tool box */
.work { flex: 1; min-height: 0; display: flex; overflow: hidden; padding-right: 1px; }
.toolbox { width: 36px; flex: none; display: flex; flex-direction: column; gap: 2px; padding-left: 2px; }
.toolbox .flatgrip { margin: 4px 0 2px 12px; }
.tool { width: 30px; height: 30px; border-radius: 4px; }
.tool svg { width: 24px; height: 24px; }
.tool.on { border: 1px solid #aeaba7; background: #e6e4e1; }
.tool-letter { font: bold 24px "DejaVu Sans", sans-serif; fill: #1a1a1a; }

/* drawing area */
.editor { position: relative; flex: 1; min-width: 0; display: grid; grid-template: 16px 1fr 20px / 13px 1fr 30px; }
.hruler { grid-area: 1 / 2 / 2 / 3; width: 100%; height: 16px; overflow: hidden; }
.vruler { grid-area: 2 / 1 / 3 / 2; width: 12px; height: 100%; overflow: hidden; margin-left: 1px; }
.hruler text, .vruler text { font: 7px "Noto Sans", sans-serif; fill: #555; }
.canvas { grid-area: 2 / 2 / 3 / 3; width: 100%; height: 100%; overflow: hidden; background: #fff; }
.guides path { stroke: #0000cc; stroke-opacity: .5; fill: none; }
.nodes rect { fill: none; stroke: #2020c8; stroke-opacity: .7; }
.side { grid-area: 1 / 3 / 4 / 4; display: flex; flex-direction: column; justify-content: space-between; align-items: center; padding: 4px 6px 3px 0; }
.zoomfix { width: 14px; height: 15px; border: 1px solid #9f9c98; border-radius: 3px; background: #fafafa; }
.zoomfix svg { width: 12px; height: 13px; }
.cms { width: 12px; height: 12px; }
.vthumb { position: absolute; right: 30px; top: 253px; width: 3px; height: 60px; background: #e87d53; }
.hthumb { position: absolute; left: 371px; bottom: 10px; width: 121px; height: 3px; background: #e87d53; }
.split-grip { position: absolute; right: 1px; top: 329px; width: 4px; height: 8px; background: repeating-linear-gradient(#bdbbb8 0 1px, transparent 1px 3px); }

/* guideline dialog */
.dialog { position: absolute; left: 74px; top: 98px; width: 281px; height: 265px; background: #f2f1f0; border-radius: 5px 5px 0 0; box-shadow: 0 8px 16px rgba(0, 0, 0, .45), 0 8px 44px rgba(0, 0, 0, .5); }
.titlebar { height: 21px; display: flex; align-items: center; gap: 3px; padding: 2px 0 0 6px; border-radius: 5px 5px 0 0; background: linear-gradient(#57554e, #3d3c38); }
.titlebar b { color: #dfdbd2; margin-left: 6px; }
.wclose, .wmax { width: 12px; height: 12px; border-radius: 50%; border: 1px solid #33322e; background: #e9592b; }
.wclose svg { width: 10px; height: 10px; }
.wmax { background: #6c6b65; }
.dialog p { line-height: 18px; padding-left: 2px; white-space: nowrap; }
.form { display: grid; grid-template-columns: 112px 130px; gap: 6px 4px; align-items: center; padding-top: 25px; margin-left: 28px; }
.form label { text-align: center; }
.form .combo { height: 26px; }
.form .combo + label, .form .focus { margin-top: 5px; }
.form .focus { border-color: #e0633a; }
.focus input::selection { background: #f07746; color: #fff; }
.relative { display: flex; align-items: center; gap: 7px; margin: 10px 0 10px 32px; height: 14px; }
input[type="checkbox"] { appearance: none; width: 14px; height: 14px; margin: 0; border: 1px solid #aaa7a3; border-radius: 3px; background: #fff; }
.actions { display: flex; gap: 8px; padding: 0 8px; }
.actions button { flex: 1; height: 25px; border: 1px solid #b3b0ac; border-radius: 4px; background: linear-gradient(#fff, #f3f2f1); }
.actions .primary { background: linear-gradient(#fba585, #f58f68); border-color: #dd6f45; }

/* dock */
.dock { width: 286px; flex: none; border-left: 1px solid #c4c1bd; padding: 2px 1px 0 2px; display: flex; flex-direction: column; overflow: hidden; border-bottom: 1px solid #b5b2ae; }
.head { height: 24px; flex: none; display: flex; align-items: center; padding: 0 6px 0 5px; background: #d6d4d3; }
.head > svg { width: 18px; height: 18px; margin-right: 1px; flex: none; }
.head span { flex: 1; white-space: nowrap; }
.mini { width: 11px; height: 11px; border: 1px solid #55534f; border-radius: 2px; margin-left: 12px; }
.mini svg { width: 11px; height: 11px; }
.panel { border: 1px solid #cfccc9; padding: 4px 4px 0; flex: none; height: 424px; }
.panel.grow { height: auto; flex: 1; padding-top: 5px; }
.tabs { display: flex; align-items: flex-end; height: 26px; gap: 1px; margin-bottom: -1px; position: relative; }
.tabs button { display: flex; align-items: center; height: 23px; padding: 0 5px 0 4px; border: 1px solid #c4c1bd; border-bottom-color: #bbb8b4; border-radius: 4px 4px 0 0; background: #edecea; color: #5c5c5c; }
.tabs .current { height: 26px; background: #f7f6f5; border-bottom-color: #f7f6f5; }
.tabs i { width: 12px; height: 12px; margin-right: 1px; }
.tabs svg { width: 12px; height: 12px; margin-right: 1px; }
.ic-fill { background: linear-gradient(135deg, #9cbde0, #fff); }
.ic-paint { border: 1px solid #999; border-left-color: #111; border-top-color: #111; }
.sheet { display: grid; grid-template-columns: 82px 1fr; column-gap: 5px; align-items: center; grid-template-rows: 27px 34px 22px 34px 27px 32px 32px 32px; row-gap: 6px; height: 300px; border: 1px solid #bbb8b4; border-radius: 0 0 3px 3px; background: #f7f6f5; padding: 7px 7px 0 0; }
.sheet label, .sheet .lab { text-align: right; color: #9b9997; white-space: nowrap; }
.fields { display: flex; align-items: center; gap: 6px; }
.wide { width: 76px; }
.miter { width: 63px; }
.unit { width: 48px; height: 27px; }
.toggles button { width: 34px; height: 34px; border: 1px solid #c9c6c3; border-radius: 4px; background: linear-gradient(#fbfbfa, #f1f0ef); }
.toggles svg { width: 26px; height: 26px; }
.fields.dashes { gap: 3px; }
.dash { width: 115px; height: 27px; }
.dash .line { position: absolute; left: 11px; top: 12px; width: 76px; height: 2px; background: #a09e9b; }
.dashes .spin { width: 58px; }
.marker { flex: 1; height: 32px; }
.slabel { display: block; height: 18px; line-height: 18px; padding-left: 4px; }
.dim { color: #9b9997; }
.slide { display: flex; align-items: center; gap: 4px; padding-left: 7px; margin-bottom: 5px; height: 22px; }
.slide .spin { width: 58px; }
.slide > input { flex: 1; min-width: 0; appearance: none; height: 20px; margin: 0; background: linear-gradient(#d4d2cf, #d4d2cf) center / 100% 4px no-repeat; }
.slide > .full { margin-right: 5px; background: linear-gradient(#ee8a64, #ee8a64) center / 100% 5px no-repeat; }
.slide > input::-webkit-slider-thumb { appearance: none; width: 12px; height: 18px; border: 1px solid #bcb9b5; border-radius: 3px 3px 6px 6px; background: repeating-linear-gradient(#999 0 1px, transparent 1px 3px) center 6px / 4px 7px no-repeat, #f6f5f4; }
.mid { margin: 2px auto 2px; flex: none; }
fieldset { margin: 0 0 6px; padding: 0 2px 0 4px; border: 1px solid #d3d0cd; border-radius: 4px; min-width: 0; }
legend { padding: 0 2px; margin-left: -1px; height: 14px; line-height: 14px; color: #666; }
.rel { display: flex; align-items: center; justify-content: flex-end; gap: 29px; }
.rel .combo { width: 158px; height: 26px; }
.treat { display: flex; align-items: center; justify-content: flex-end; gap: 39px; height: 14px; margin: 6px 65px 9px 0; }
.icons { display: grid; grid-template-columns: repeat(6, 36px); gap: 12px 0; padding: 2px 0 6px 2px; }
.icons svg { width: 24px; height: 24px; }
.icons button { justify-self: start; }
.shifted { padding-left: 38px; }
.ga { font: bold 16px "Liberation Sans", sans-serif; fill: #3b5068; }
.gy { font: italic bold 22px "Liberation Serif", serif; fill: #111; }
.dock-scroll { width: 3px; height: 501px; flex: none; background: #e87d53; }

/* command and snap columns */
.column { width: 31px; flex: none; display: flex; flex-direction: column; align-items: center; overflow: hidden; margin-left: 1px; }
.snapcol { margin-left: 1px; }
.column .flatgrip { margin: 4px 0 3px; flex: none; }
.column button { width: 28px; height: 28px; margin: 1px 0; border-radius: 4px; }
.column svg { width: 24px; height: 24px; }
.column .on { border: 1px solid #aeaba7; background: linear-gradient(#e9e8e6, #dddbd8); }
.column hr { width: 20px; height: 1px; border: 0; margin: 5px 0 6px; background: #d2d0cd; flex: none; }
.column .more { margin-top: 11px; }

/* palette */
.palette { position: relative; height: 18px; flex: none; display: flex; align-items: flex-start; border-top: 1px solid #b9b6b2; border-bottom: 1px solid #b9b6b2; }
.palette .none { width: 16px; height: 16px; margin-left: 1px; background: #fff; }
.palette svg { width: 16px; height: 16px; }
.swatches { flex: 1; min-width: 0; display: flex; overflow: hidden; }
.swatches button { width: 16px; height: 16px; }
.palette .back { width: 13px; height: 16px; }
.palette .back svg { width: 8px; height: 10px; }
.pthumb { position: absolute; left: 0; bottom: -1px; width: 246px; height: 3px; background: #e87d53; }

/* status bar */
.status { height: 25px; flex: none; display: flex; align-items: center; }
dl { display: grid; grid-template-columns: 70px 56px; padding-left: 2px; font-size: 9px; line-height: 12px; }
.opac { display: flex; align-items: center; gap: 3px; font-size: 10px; }
.opac .spin { width: 36px; height: 19px; }
.opac .steps { width: 13px; }
.ssep { width: 1px; height: 24px; margin: 0 4px 0 3px; background: #d6d4d1; }
.small { width: 18px; height: 18px; margin-right: 2px; }
.small svg { width: 14px; height: 14px; }
.layer { width: 70px; height: 22px; }
.app .layer select { font-weight: bold; font-size: 10px; padding-left: 5px; }
.status p { flex: 1; min-width: 0; margin-left: 6px; white-space: nowrap; overflow: hidden; }
.status pre { font: 9px "DejaVu Sans Mono", monospace; line-height: 12px; border-left: 1px solid #d6d4d1; padding-left: 3px; margin-right: 4px; }
.zoomlab { display: flex; align-items: center; gap: 3px; font-size: 10px; }
.zoomlab .spin { width: 55px; height: 19px; }
.zoomlab .steps { width: 14px; }
.resize { width: 12px; height: 12px; margin: 8px 0 0 7px; }
</style>
